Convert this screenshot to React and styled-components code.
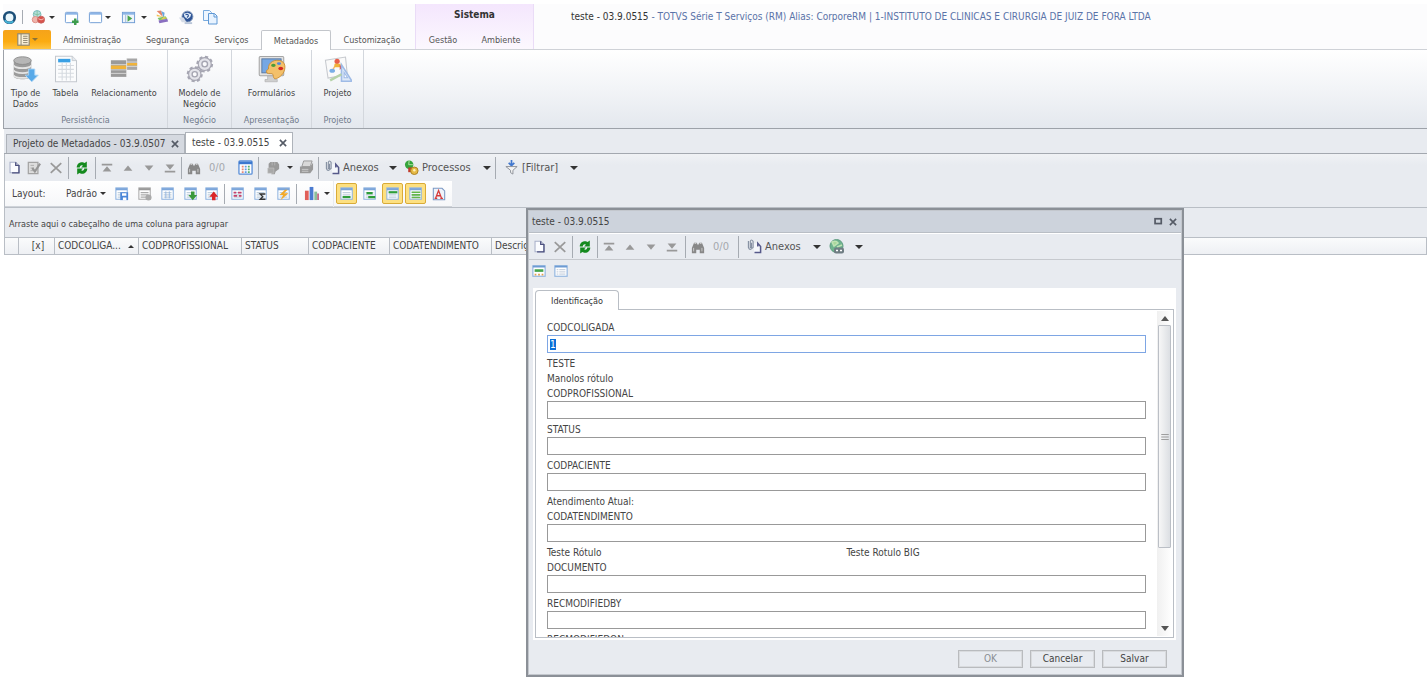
import React, { useEffect, useRef } from "react";
import styled, { createGlobalStyle, css } from "styled-components";

const uiFont = `"DejaVu Sans Condensed", "DejaVu Sans", Tahoma, sans-serif`;
const line = "#b9bec5";
const face = "#e8ebf0";

const GlobalStyle = createGlobalStyle`
  * {
    box-sizing: border-box;
  }
  body {
    margin: 0;
    background: #fff;
    color: #444;
    font-family: ${uiFont};
    font-size: 9px;
    line-height: 12px;
    overflow: hidden;
  }
  button, input {
    font: inherit;
    color: inherit;
  }
  button {
    border: 0;
    padding: 0;
    background: none;
    white-space: nowrap;
  }
`;

/* ---------- icons ---------- */

const Svg = styled.svg`
  display: block;
  flex: none;
  width: ${({ $size }) => $size || 14}px;
  height: ${({ $size }) => $size || 14}px;
`;

function Icon({ size, children }) {
  return (
    <Svg $size={size} viewBox="0 0 16 16" aria-hidden="true">
      {children}
    </Svg>
  );
}

const LogoIcon = () => (
  <Icon size={15}>
    <circle cx="8" cy="8" r="5.600" fill="#e9f6fb" stroke="#1c4f78" strokeWidth="2.800" />
    <path d="M3 11a6 6 0 0 0 9 1" fill="none" stroke="#45b5d8" strokeWidth="2" />
  </Icon>
);
const BallsIcon = () => (
  <Icon>
    <circle cx="7" cy="5" r="4.400" fill="#b5e0df" stroke="#6eb5b5" />
    <path d="M3 4q4 3 8 0M7 1v8" stroke="#7fc09a" fill="none" />
    <circle cx="5" cy="11" r="3.600" fill="#f0b4ab" stroke="#dd8a82" />
    <circle cx="11.500" cy="11" r="4" fill="#d9534c" stroke="#c5605b" />
    <path d="M8.500 10q3 2.500 6 0" stroke="#f5d0cc" fill="none" />
  </Icon>
);
const WindowIcon = ({ add }) => (
  <Icon size={15}>
    <rect x="1.500" y="2.500" width="13" height="11" rx="1" fill="#fff" stroke="#6d9bd3" />
    <path d="M2 4h12" stroke="#8db5e6" strokeWidth="2" />
    {add && <path d="M12 9v7M8.500 12.500h7" stroke="#3d9c4c" strokeWidth="2.600" />}
  </Icon>
);
const RunWindowIcon = () => (
  <Icon size={15}>
    <rect x="1.500" y="2.500" width="13" height="11" fill="#eef4fb" stroke="#6d9bd3" />
    <path d="M2 4h12" stroke="#8db5e6" strokeWidth="2" />
    <path d="M5 5v8" stroke="#9db8d8" />
    <path d="M7 5.500l5 3.500-5 3.500z" fill="#4aa34c" />
  </Icon>
);
const SwatchIcon = () => (
  <Icon>
    <path d="M2 1l5-.500L9 8z" fill="#e5846a" />
    <path d="M7 1l4 2-1 6z" fill="#6aa6de" />
    <path d="M2 5l8 3-8-1z" fill="#f3c04d" />
    <path d="M3 9l9-2 2 3-9 2z" fill="#7ac06b" />
    <path d="M4 12l10-2 1 3-10 2z" fill="#8a6fc0" />
    <path d="M10 8l4 1-8 2z" fill="#f0d04d" />
  </Icon>
);
const GlobeHelpIcon = () => (
  <Icon size={15}>
    <circle cx="9" cy="7" r="5.800" fill="#2f5597" stroke="#7c93b6" />
    <path d="M5 4l4-1 4 1.500-1 3-3 2-3-2z" fill="#e2eefb" />
    <path d="M7 5q3-1 3 1.500L8.500 8" fill="none" stroke="#2f5597" strokeWidth="1.300" />
    <path d="M0 8l5 0 3 5H3z" fill="#d4dbe6" />
    <path d="M6 14h8" stroke="#b9c5d8" strokeWidth="2" />
  </Icon>
);
const CopyIcon = () => (
  <Icon size={16}>
    <path d="M1.500 1.500h6l2 2v8h-8z" fill="#eef6ff" stroke="#78aade" />
    <path d="M6.500 4.500h6l2.500 2.500v8H6.500z" fill="#e8f3ff" stroke="#5f98d5" />
    <path d="M12 4.500V8h3" fill="none" stroke="#5f98d5" />
  </Icon>
);
const BookIcon = () => (
  <Icon size={13}>
    <rect x="1" y="1" width="14" height="14" fill="#fbf1d8" stroke="#8d8570" strokeWidth="1.400" />
    <path d="M5 1v14M7.500 4h5.500M7.500 6.600h5.500M7.500 9.200h5.500M7.500 11.800h5.500" stroke="#8d8570" strokeWidth="1.200" />
  </Icon>
);
const DatabaseIcon = () => (
  <Icon size={26}>
    <path d="M1 3.500v8.500c0 2.500 10 2.500 10 0V3.500z" fill="#9b9b9b" />
    <path d="M1 6c1 2 9 2 10 0M1 8.800c1 2 9 2 10 0M1 11.600c1 2 9 2 10 0" fill="none" stroke="#e5e5e5" />
    <ellipse cx="6" cy="3.200" rx="5" ry="2.200" fill="#b6b6b6" stroke="#8c8c8c" strokeWidth=".5" />
    <path d="M9.500 8h3.500v3.500h2L11.300 15.300 7.500 11.500h2z" fill="#58a9e8" stroke="#a8d3f5" strokeWidth=".5" />
  </Icon>
);
const SheetIcon = () => (
  <Icon size={28}>
    <path d="M2 .7h9.500l2.500 2.500V15.300H2z" fill="#fbfcfd" stroke="#c3c8ce" strokeWidth=".6" />
    <path d="M3.500 2.200h7v2h-7z" fill="#3aa0e4" />
    <path d="M3.500 6h9M3.500 8.200h9M3.500 10.400h9M3.500 12.600h9M5.800 4.500v10M8.200 4.500v10M10.500 4.500v10" stroke="#d5dae0" strokeWidth=".6" />
    <path d="M11.500.7v2.500H14" fill="#e5e9ee" stroke="#c3c8ce" strokeWidth=".5" />
  </Icon>
);
const RelationIcon = () => (
  <Icon size={28}>
    <path d="M.5 3h9v9.500h-9z" fill="#9a9a9a" />
    <path d="M9.500 2h6v6.500h-6z" fill="#a6a6a6" />
    <path d="M.5 6h9v2h-9zM9.500 4.500h6v1.500h-6z" fill="#f0b33a" />
    <path d="M.5 5.500h9M.5 8.500h9M.5 10.500h9M9.500 4h6M9.500 6.500h6M9.500 2v10.500" stroke="#ececec" strokeWidth=".4" />
  </Icon>
);
const GearsIcon = () => (
  <Icon size={26}>
    <g fill="#e4e4ea" stroke="#a6a6b2">
      <circle cx="10.700" cy="5.200" r="4.200" strokeWidth="1.200" strokeDasharray="1.800 1.500" />
      <circle cx="10.700" cy="5.200" r="3.700" strokeWidth=".6" />
      <circle cx="10.700" cy="5.200" r="1.600" fill="#fafafc" strokeWidth=".8" />
      <circle cx="5" cy="11" r="4" strokeWidth="1.200" strokeDasharray="1.800 1.340" />
      <circle cx="5" cy="11" r="3.500" strokeWidth=".6" />
      <circle cx="5" cy="11" r="1.500" fill="#fafafc" strokeWidth=".8" />
    </g>
  </Icon>
);
const PaletteIcon = () => (
  <Icon size={28}>
    <rect x=".7" y=".8" width="14" height="11" rx=".6" fill="#e3e3e3" stroke="#a5a5a5" strokeWidth=".6" />
    <rect x="2.200" y="2.200" width="11" height="8" fill="#75a7e4" stroke="#55749c" strokeWidth=".5" />
    <path d="M5.500 12h4v2h1.500v1.300H4V14h1.500z" fill="#cfcfcf" stroke="#b0b0b0" strokeWidth=".4" />
    <path d="M6 8C5.500 4 10 2 13.500 3.500c3 1.500 2 6 0 8-2 2-4 2.500-4.500 1.500-.5-1 0-2-1-2.300C6.500 10.500 5 11 4.800 9.600 4.700 8.500 5.500 8.500 6 8z" fill="#f3c06a" stroke="#c98b31" strokeWidth=".5" />
    <ellipse cx="8.800" cy="5.900" rx="1.300" ry=".9" fill="#4b9c3a" />
    <ellipse cx="12" cy="4.900" rx="1.200" ry=".8" fill="#4e86dc" />
    <ellipse cx="13" cy="7.700" rx="1.400" ry="1" fill="#d52a20" />
  </Icon>
);
const ProjectIcon = () => (
  <Icon size={28}>
    <path d="M.8 3l11.500-1.800 1 10-11 2z" fill="#fafafa" stroke="#c6c9ce" strokeWidth=".6" />
    <path d="M7.500 4L4.500 9.500" fill="none" stroke="#f2b96c" strokeWidth=".8" />
    <circle cx="7.500" cy="3.600" r="1.500" fill="#e8604c" />
    <path d="M6 5h3.500v2H6z" fill="#f0b33a" />
    <path d="M9 5.500l1.500 1.500L9 8.500z" fill="#d8484c" />
    <ellipse cx="4.700" cy="9" rx="1.600" ry="1.200" fill="#79aee6" />
    <path d="M10 5.500v9.500h6z" fill="#dce8f8" stroke="#9fbbe6" strokeWidth=".9" />
    <path d="M11.500 10v3h2z" fill="#fff" stroke="#9fbbe6" strokeWidth=".6" />
    <path d="M3.500 14.500L10 11" stroke="#b5d2a8" strokeWidth="1.400" />
  </Icon>
);
const NewIcon = () => (
  <Icon size={13}>
    <path d="M2.500 1.500h7l4 4v9h-11z" fill="#fbfcff" stroke="#a9b1c9" strokeWidth="1.300" />
    <path d="M13.500 5v9.500H5M9.500 1.500v4h4" fill="none" stroke="#4b4f7e" strokeWidth="1.600" />
  </Icon>
);
const EditIcon = () => (
  <Icon>
    <path d="M1.500 1.500h11v13h-11z" fill="#ddd" stroke="#a3a3a3" strokeWidth="1.400" />
    <path d="M4 5h4M4 8h4M4 11h6" stroke="#aaa" />
    <path d="M15 3l-6 9-3-4" fill="none" stroke="#969696" strokeWidth="2.400" />
  </Icon>
);
const DeleteIcon = () => (
  <Icon>
    <path d="M2 2.500l12 11M14 2.500L2 13.500" stroke="#999" strokeWidth="2" />
  </Icon>
);
const RefreshIcon = () => (
  <Icon>
    <path d="M2 7.500C2 3.500 5 1 9 1.500l2 .8L13.500.5V7.500H7l2-2.200C7 4.300 5.500 5.500 5.500 7.500z" fill="#158a1e" />
    <path d="M14 8.500c0 4-3 6.500-7 6l-2-.8L2.500 15.500V8.500H9l-2 2.200c2 1 3.500-.2 3.500-2.200z" fill="#158a1e" />
  </Icon>
);
const NavIcon = ({ kind }) => (
  <Icon>
    {kind === "first" && <path d="M2 3h12v2H2zM8 6l5 6H3z" fill="#999" />}
    {kind === "prev" && <path d="M8 5l5 6H3z" fill="#999" />}
    {kind === "next" && <path d="M8 11l5-6H3z" fill="#999" />}
    {kind === "last" && <path d="M8 10l5-6H3zM2 11h12v2H2z" fill="#999" />}
  </Icon>
);
const FindIcon = () => (
  <Icon>
    <path d="M1 15V9l2.500-6h3L8 6l1.500-3h3L15 9v6h-5v-4H6v4z" fill="#888" />
    <path d="M3 9v4M12.500 9v4M4 4h2M10 4h2" stroke="#d2d2d2" />
  </Icon>
);
const CalendarIcon = () => (
  <Icon size={15}>
    <rect x="1" y="1" width="14" height="14" rx="1" fill="#fff" stroke="#5b8fd8" strokeWidth="1.400" />
    <path d="M1 3h14" stroke="#3c78cf" strokeWidth="3" />
    <path d="M4 7h2M4 10h2M4 13h2" stroke="#e88a75" strokeWidth="1.800" />
    <path d="M7.200 7h2M7.200 10h2M7.200 13h2" stroke="#5f9ce6" strokeWidth="1.800" />
    <path d="M10.500 7h2M10.500 10h2M10.500 13h2" stroke="#5ab06a" strokeWidth="1.800" />
  </Icon>
);
const HandIcon = () => (
  <Icon>
    <path d="M3 3l2-2h8l2 3v5l-4 3-1 3H6l1-3-4-2z" fill="#999" />
    <path d="M2 8h7v6H2z" fill="#a8a8a8" stroke="#c9c9c9" strokeWidth=".6" />
    <path d="M7 1v4M10 1v4" stroke="#c4c4c4" strokeWidth=".7" />
  </Icon>
);
const PrinterIcon = () => (
  <Icon size={15}>
    <path d="M5 1h9l-2 6H3z" fill="#d9d9d9" stroke="#999" />
    <path d="M1 7h11l3-4v7l-3 4H1z" fill="#999" />
    <path d="M3 10h7M3 12h7" stroke="#ccc" />
  </Icon>
);
const AttachIcon = () => (
  <Icon size={15}>
    <path d="M7.500 4.500h4l3 3v7h-7z" fill="#f5f7fb" />
    <path d="M8 14.500h6.500V8l-3-3.500v3.500" fill="none" stroke="#56598a" strokeWidth="1.600" />
    <path d="M1.500 2v7q1.500 4 5 0V2.500q-2-3-3 0V9h1.300V4" fill="none" stroke="#8590a2" strokeWidth="1.200" />
  </Icon>
);
const ProcessIcon = () => (
  <Icon size={15}>
    <circle cx="5.500" cy="5" r="4.500" fill="#35a43c" />
    <path d="M5.500.5L5 5l4.500 0" stroke="#b6e6a4" fill="none" />
    <path d="M4.500 8h5v5h-5z" fill="#c03c2c" />
    <circle cx="11" cy="11.500" r="4" fill="#e6ba45" stroke="#a97f21" />
    <circle cx="11" cy="11" r="1.300" fill="#fff0bb" />
  </Icon>
);
const FilterIcon = () => (
  <Icon size={15}>
    <path d="M8 0v5M5 3l3 3 3-3" stroke="#4178cf" strokeWidth="1.800" fill="none" />
    <path d="M2 7h12l-4.500 4v4L7 13.500V11z" fill="#f4f4f4" stroke="#8b8f96" />
  </Icon>
);
const GlobeIcon = () => (
  <Icon size={16}>
    <circle cx="7.500" cy="7" r="6.500" fill="#6fb38e" stroke="#5f9c80" />
    <path d="M3 3q4-2 6 1l-4 3zM8 8l5-2" stroke="#bfe2b4" strokeWidth="1.500" fill="#a8d79a" />
    <rect x="5" y="8.500" width="10" height="6" rx="2" fill="#6f7d83" />
    <path d="M7 11.500h2M11 11.500h2" stroke="#fff" strokeWidth="1.500" />
  </Icon>
);

/* small sheet used by all the layout commands; the mark on it varies */
const GridIcon = ({ grey, children }) => (
  <Icon>
    <rect x="1" y="1" width="13" height="13" fill="#fff" stroke={grey ? "#aaa" : "#8fb3df"} strokeWidth="1.200" />
    <path d="M1 2.500h13" stroke={grey ? "#999" : "#7ba5da"} strokeWidth="2.500" />
    <path d="M3 6.500h9M3 9h9M3 11.500h9" stroke={grey ? "#aaa" : "#c0d0de"} strokeWidth="1.400" />
    {children}
  </Icon>
);
const ChartIcon = () => (
  <Icon size={15}>
    <path d="M1 5h4v10H1z" fill="#e0605a" />
    <path d="M6 1h4v14H6z" fill="#4b7bd0" />
    <path d="M11 6h3v9h-3z" fill="#8cbf9a" />
    <path d="M14 8h2v7h-2z" fill="#c76c88" />
  </Icon>
);

/* ---------- shared parts ---------- */

const Caret = styled.span`
  display: inline-block;
  flex: none;
  border: solid transparent;
  border-width: ${({ $small }) => ($small ? "3px 3px 0" : "4px 4px 0")};
  border-top-color: #333;
`;

const ToolButton = styled.button`
  display: flex;
  align-items: center;
  justify-content: center;
  flex: none;
  width: ${({ $w }) => $w || 22}px;
  height: 21px;
  ${({ $on }) =>
    $on &&
    css`
      border: 1px solid #d9ab38;
      border-radius: 2px;
      background: #fde081;
    `}
`;

const TextButton = styled.button`
  display: flex;
  align-items: center;
  gap: 3px;
  flex: none;
  width: ${({ $w }) => $w}px;
  height: 22px;
  padding: 0 4px 0 3px;
  font-size: 11px;
  color: #555;

  ${Caret} {
    margin-left: auto;
  }
`;

const Separator = styled.span`
  flex: none;
  width: 1px;
  height: ${({ $h }) => $h || 22}px;
  margin: 0 ${({ $gap = 1 }) => $gap}px 0 ${({ $lead = 1 }) => $lead}px;
  background: #a6abb2;
`;

const Counter = styled.span`
  width: 27px;
  padding-left: 4px;
  font-size: 11px;
  color: #a5a8ad;
`;

/* ---------- header and ribbon ---------- */

const Header = styled.header`
  display: flex;
  margin: 4px 0 0 3px;
  height: 46px;
  background: #fcfcfd;
  border-bottom: 1px solid #cfd2d7;
`;

const HeaderLeft = styled.div`
  flex: none;
  width: 412px;
`;

const QuickAccess = styled.div`
  display: flex;
  align-items: center;
  height: 26px;
`;

const MenuTabs = styled.nav`
  display: flex;
  height: 20px;
`;

const MenuTab = styled.button`
  flex: none;
  width: ${({ $w }) => $w}px;
  height: 20px;
  color: #555;
  ${({ $active }) =>
    $active &&
    css`
      border: 1px solid #c3c6cb;
      border-bottom: 0;
      border-radius: 2px 2px 0 0;
      background: #fff;
    `}
`;

const AppButton = styled.button`
  display: flex;
  align-items: center;
  justify-content: center;
  gap: 2px;
  width: 48px;
  height: 19px;
  background: linear-gradient(#f5a31a, #fbab12 60%, #ffc440);
  border-radius: 2px 2px 0 0;

  ${Caret} {
    border-top-color: #8b7338;
  }
`;

const ContextTabs = styled.div`
  flex: none;
  width: 119px;
  border: solid #eadcf7;
  border-width: 0 1px;
  background: linear-gradient(#f4e6fd, #fcf8fe);
`;

const ContextTitle = styled.div`
  height: 26px;
  padding-top: 5px;
  text-align: center;
  font-size: 10px;
  font-weight: bold;
  color: #333;
`;

const Caption = styled.h1`
  margin: 0;
  padding: 7px 0 0 37px;
  font-size: 10px;
  font-weight: normal;
  white-space: nowrap;
  color: #5a73a8;

  span {
    color: #333;
  }
`;

const Ribbon = styled.section`
  display: flex;
  height: 79px;
  margin-left: 3px;
  background: linear-gradient(#fff, #f2f4f7 50%, #e4e8ee);
  border: solid #9da2a9;
  border-width: 0 0 1px 1px;
`;

const RibbonGroup = styled.div`
  display: flex;
  flex-direction: column;
  width: ${({ $w }) => $w}px;
  border-right: 1px solid #d3d7dd;
`;

const RibbonItems = styled.div`
  display: flex;
  flex: 1;
`;

const RibbonButton = styled.button`
  display: flex;
  flex-direction: column;
  align-items: center;
  width: ${({ $w }) => $w || 60}px;
  flex: ${({ $grow }) => ($grow ? 1 : "none")};
  padding: 5px 4px 0;
  white-space: normal;
  line-height: 11px;

  ${Svg} {
    width: 28px;
    height: 28px;
    margin-bottom: 5px;
  }
`;

const RibbonLabel = styled.div`
  height: 15px;
  line-height: 15px;
  text-align: center;
  color: #717b8c;
`;

/* ---------- documents and grid ---------- */

const DocTabs = styled.div`
  display: flex;
  align-items: flex-end;
  height: 25px;
  margin-left: 4px;
  padding-left: 2px;
  background: ${face};
  border-bottom: 1px solid #a3a8af;
`;

const DocTab = styled.div`
  display: flex;
  align-items: center;
  justify-content: space-between;
  width: ${({ $w }) => $w}px;
  height: ${({ $active }) => ($active ? 21 : 19)}px;
  padding: 0 4px 0 6px;
  border: 1px solid #aeb3ba;
  border-bottom: 0;
  background: ${({ $active }) => ($active ? "#fff" : "#d5d9e0")};
  font-size: 10px;
`;

const Workspace = styled.main`
  margin-left: 4px;
  border-left: 1px solid ${line};
`;

const Toolbar = styled.div`
  display: flex;
  align-items: center;
  height: 27px;
  background: linear-gradient(#f0f2f5, ${face} 40%);
`;

const LayoutBars = styled.div`
  display: flex;
  gap: 1px;
  height: 27px;
  background: ${face};
  border-bottom: 1px solid ${line};
`;

const LayoutBar = styled.div`
  display: flex;
  align-items: center;
  gap: ${({ $gap }) => $gap || 0}px;
  padding: 0 3px 0 2px;
  background: linear-gradient(#fff, #f6f7f9);
  border-bottom: 1px solid #cfd3d9;
`;

const LayoutText = styled.span`
  width: ${({ $w }) => $w}px;
  padding-left: 5px;
  font-size: 10px;
`;

const LayoutSelect = styled.button`
  display: flex;
  align-items: center;
  justify-content: center;
  gap: 3px;
  width: 48px;
  font-size: 10px;
`;

const GroupPanel = styled.div`
  height: 29px;
  padding: 10px 0 0 4px;
  background: ${face};
`;

const Grid = styled.table`
  width: 100%;
  table-layout: fixed;
  border-collapse: separate;
  border-spacing: 0;
  border: solid ${line};
  border-width: 1px 0;

  th {
    height: 16px;
    padding: 0 0 0 3px;
    overflow: hidden;
    text-align: left;
    font-size: 10px;
    font-weight: normal;
    white-space: nowrap;
    background: linear-gradient(#fafbfc, #eef0f4);
    border-right: 1px solid ${line};
  }
  th:nth-child(2) {
    text-align: center;
  }
`;

const SortMark = styled.span`
  float: right;
  margin: 5px 4px 0 0;
  border: solid transparent;
  border-width: 0 3px 3px;
  border-bottom-color: #333;
`;

/* ---------- record window ---------- */

const Window = styled.section`
  position: absolute;
  left: 526px;
  top: 208px;
  width: 658px;
  border: 2px solid #8b9097;
  outline: 1px solid #c3c7cd;
  outline-offset: -3px;
  background: ${face};
`;

const WindowTitle = styled.div`
  display: flex;
  align-items: center;
  height: 22px;
  margin: 1px 1px 0;
  padding: 0 3px;
  background: #cdd3dc;
  border-bottom: 1px solid ${line};
  font-size: 10px;

  span {
    flex: 1;
  }
`;

const WindowToolbar = styled.div`
  display: flex;
  align-items: center;
  height: 27px;
  margin: 0 1px;
  border-top: 1px solid #fff;
  border-bottom: 1px solid #c6c9ce;
`;

const ViewBar = styled.div`
  display: flex;
  height: 28px;
`;

const Pages = styled.div`
  margin: 0 6px 0 5px;
  padding: 2px;
  background: #fff;
`;

const PageTab = styled.button`
  display: block;
  position: relative;
  width: 84px;
  height: 20px;
  margin-bottom: -1px;
  border: 1px solid ${line};
  border-bottom: 0;
  border-radius: 4px 4px 0 0;
  background: #fff;
  color: #333;
`;

const PageBody = styled.div`
  display: flex;
  height: 329px;
  border: 1px solid ${line};
`;

const Form = styled.form`
  flex: 1;
  padding: 10px 10px 0 11px;
  overflow: hidden;
  font-size: 10px;
  line-height: 15px;
`;

const Row = styled.div`
  display: grid;
  grid-template-columns: 1fr 1fr;
`;

const Field = styled.div`
  height: 36px;

  label {
    display: block;
    height: 15px;
  }
  input {
    display: block;
    width: 100%;
    height: 18px;
    padding: 0 2px;
    border: 1px solid #999;
    background: #fff;
    outline: 0;
  }
  input:focus {
    border-color: #7ea6e4;
  }
  input::selection {
    background: #0a6fd8;
    color: #fff;
  }
`;

const ScrollBar = styled.div`
  display: flex;
  flex-direction: column;
  align-items: center;
  width: 15px;
  margin: 1px;
  padding: 5px 0;
  background: linear-gradient(90deg, #f0f0f0, #fff);
`;

const ScrollArrow = styled.span`
  border: solid transparent;
  border-width: ${({ $up }) => ($up ? "0 4px 5px" : "5px 4px 0")};
  border-color: ${({ $up }) => ($up ? "transparent transparent #555" : "#555 transparent transparent")};
`;

const ScrollThumb = styled.span`
  display: flex;
  align-items: center;
  justify-content: center;
  width: 13px;
  height: 223px;
  margin: 4px 0 auto;
  border: 1px solid #bbbfc6;
  border-radius: 1px;
  background: linear-gradient(90deg, #f7f7f7, #dcdfe3);
`;

const Actions = styled.div`
  display: flex;
  justify-content: flex-end;
  gap: 7px;
  padding: 10px 15px 7px;
`;

const ActionButton = styled.button`
  width: 65px;
  height: 18px;
  border: 1px solid #b9bbbe;
  outline: 1px solid #d9dbde;
  outline-offset: -2px;
  font-size: 10px;
  color: ${({ disabled }) => (disabled ? "#8a8d92" : "#444")};
`;

const menu = [
  ["Administração", 82],
  ["Segurança", 69],
  ["Serviços", 59],
  ["Metadados", 70],
  ["Customização", 82],
];

const columns = [
  ["", 14],
  ["[x]", 36],
  ["CODCOLIGA...", 84],
  ["CODPROFISSIONAL", 103],
  ["STATUS", 67],
  ["CODPACIENTE", 81],
  ["CODATENDIMENTO", 102],
  ["Descrição"],
];

const fields = [
  { name: "CODCOLIGADA", value: "1" },
  { texts: ["TESTE"] },
  { texts: ["Manolos rótulo"] },
  { name: "CODPROFISSIONAL" },
  { name: "STATUS" },
  { name: "CODPACIENTE" },
  { texts: ["Atendimento Atual:"] },
  { name: "CODATENDIMENTO" },
  { texts: ["Teste Rótulo", "Teste Rotulo BIG"] },
  { name: "DOCUMENTO" },
  { name: "RECMODIFIEDBY" },
  { name: "RECMODIFIEDON" },
];

function NavButtons() {
  return ["first", "prev", "next", "last"].map((kind) => (
    <ToolButton key={kind} $w={21} aria-label={kind}>
      <NavIcon kind={kind} />
    </ToolButton>
  ));
}

function CloseButton() {
  return (
    <ToolButton $w={11} aria-label="Fechar">
      <Icon size={10}>
        <path d="M3 3l10 10M13 3L3 13" stroke="#555b66" strokeWidth="2.600" />
      </Icon>
    </ToolButton>
  );
}

function TopBar() {
  return (
    <Header>
      <HeaderLeft>
        <QuickAccess>
          <ToolButton $w={13}><LogoIcon /></ToolButton>
          <Separator $h={14} $lead={6} $gap={3} />
          <ToolButton $w={23}><BallsIcon /></ToolButton>
          <ToolButton $w={6}><Caret $small /></ToolButton>
          <ToolButton $w={32}><WindowIcon add /></ToolButton>
          <ToolButton $w={16}><WindowIcon /></ToolButton>
          <ToolButton $w={10}><Caret $small /></ToolButton>
          <ToolButton $w={30}><RunWindowIcon /></ToolButton>
          <ToolButton $w={2}><Caret $small /></ToolButton>
          <ToolButton $w={34}><SwatchIcon /></ToolButton>
          <ToolButton $w={14}><GlobeHelpIcon /></ToolButton>
          <ToolButton $w={34}><CopyIcon /></ToolButton>
        </QuickAccess>
        <MenuTabs>
          <AppButton aria-label="Menu">
            <BookIcon />
            <Caret $small />
          </AppButton>
          {menu.map(([name, w]) => (
            <MenuTab key={name} $w={w} $active={name === "Metadados"}>{name}</MenuTab>
          ))}
        </MenuTabs>
      </HeaderLeft>
      <ContextTabs>
        <ContextTitle>Sistema</ContextTitle>
        <MenuTabs>
          <MenuTab $w={54}>Gestão</MenuTab>
          <MenuTab $w={62}>Ambiente</MenuTab>
        </MenuTabs>
      </ContextTabs>
      <Caption>
        <span>teste - 03.9.0515</span> - TOTVS Série T Serviços (RM) Alias: CorporeRM |
        1-INSTITUTO DE CLINICAS E CIRURGIA DE JUIZ DE FORA LTDA
      </Caption>
    </Header>
  );
}

function MainRibbon() {
  return (
    <Ribbon>
      <RibbonGroup $w={164}>
        <RibbonItems>
          <RibbonButton $w={43}><DatabaseIcon />Tipo de Dados</RibbonButton>
          <RibbonButton $w={37}><SheetIcon />Tabela</RibbonButton>
          <RibbonButton $w={80}><RelationIcon />Relacionamento</RibbonButton>
        </RibbonItems>
        <RibbonLabel>Persistência</RibbonLabel>
      </RibbonGroup>
      <RibbonGroup $w={64}>
        <RibbonItems>
          <RibbonButton $grow><GearsIcon />Modelo de Negócio</RibbonButton>
        </RibbonItems>
        <RibbonLabel>Negócio</RibbonLabel>
      </RibbonGroup>
      <RibbonGroup $w={80}>
        <RibbonItems>
          <RibbonButton $grow><PaletteIcon />Formulários</RibbonButton>
        </RibbonItems>
        <RibbonLabel>Apresentação</RibbonLabel>
      </RibbonGroup>
      <RibbonGroup $w={52}>
        <RibbonItems>
          <RibbonButton $grow><ProjectIcon />Projeto</RibbonButton>
        </RibbonItems>
        <RibbonLabel>Projeto</RibbonLabel>
      </RibbonGroup>
    </Ribbon>
  );
}

function MainToolbar() {
  return (
    <Toolbar>
      <ToolButton $w={18}><NewIcon /></ToolButton>
      <ToolButton><EditIcon /></ToolButton>
      <ToolButton><DeleteIcon /></ToolButton>
      <Separator />
      <ToolButton $w={24}><RefreshIcon /></ToolButton>
      <Separator $gap={0} />
      <NavButtons />
      <Separator />
      <ToolButton><FindIcon /></ToolButton>
      <Counter>0/0</Counter>
      <ToolButton $w={26}><CalendarIcon /></ToolButton>
      <Separator $lead={0} />
      <ToolButton $w={26}><HandIcon /></ToolButton>
      <ToolButton $w={8}><Caret $small /></ToolButton>
      <ToolButton $w={24}><PrinterIcon /></ToolButton>
      <Separator $lead={0} $gap={3} />
      <TextButton $w={79}><AttachIcon />Anexos<Caret /></TextButton>
      <TextButton $w={94}><ProcessIcon />Processos<Caret /></TextButton>
      <Separator $lead={0} $gap={5} />
      <TextButton $w={81}><FilterIcon />[Filtrar]<Caret /></TextButton>
    </Toolbar>
  );
}

function LayoutToolbar() {
  return (
    <LayoutBars>
      <LayoutBar>
        <LayoutText $w={55}>Layout:</LayoutText>
        <LayoutSelect>Padrão <Caret $small /></LayoutSelect>
        <ToolButton $w={23}>
          <GridIcon><path d="M6 6h9v9H6z" fill="#4a86d8" /><path d="M8 7h5v3H8zM9 12h4v3H9z" fill="#fff" /></GridIcon>
        </ToolButton>
        <ToolButton $w={23}>
          <GridIcon grey><circle cx="12" cy="12" r="3.500" fill="#aaa" /></GridIcon>
        </ToolButton>
        <ToolButton $w={23}>
          <GridIcon><path d="M5.500 5v8M9.500 5v8" stroke="#8fb4e2" /></GridIcon>
        </ToolButton>
        <ToolButton $w={23}>
          <GridIcon><path d="M8 5h4v4h3l-5 6-5-6h3z" fill="#39993c" /></GridIcon>
        </ToolButton>
        <ToolButton $w={20}>
          <GridIcon><path d="M8 15h4v-4h3l-5-6-5 6h3z" fill="#da2527" /></GridIcon>
        </ToolButton>
        <Separator $h={20} $lead={2} />
        <ToolButton $w={23}>
          <GridIcon><path d="M3 6.500h3M8 6.500h4M3 10h4M9 10h3" stroke="#c4426c" strokeWidth="2" /></GridIcon>
        </ToolButton>
        <ToolButton $w={23}>
          <GridIcon><path d="M13 8H7l3 3-3 3h6" fill="none" stroke="#333" strokeWidth="1.500" /></GridIcon>
        </ToolButton>
        <ToolButton $w={23}>
          <GridIcon><path d="M9 3L3 9h4l-3 6 9-8H8l4-4z" fill="#f2a928" /></GridIcon>
        </ToolButton>
        <Separator $h={20} $gap={2} />
        <ToolButton $w={24}><ChartIcon /></ToolButton>
        <ToolButton $w={7}><Caret $small /></ToolButton>
      </LayoutBar>
      <LayoutBar $gap={2}>
        <ToolButton $w={21} $on>
          <GridIcon><path d="M3 11.500h9" stroke="#2e9e3b" strokeWidth="2.500" /></GridIcon>
        </ToolButton>
        <ToolButton $w={21}>
          <GridIcon><path d="M4 7h7M6 11.500h8" stroke="#2e9e3b" strokeWidth="2.500" /></GridIcon>
        </ToolButton>
        <ToolButton $w={21} $on>
          <GridIcon><path d="M3 6h10" stroke="#2e9e3b" strokeWidth="2.500" /></GridIcon>
        </ToolButton>
        <ToolButton $w={21} $on>
          <GridIcon><path d="M3 6h10M3 9h10M3 12h10" stroke="#62b64c" strokeWidth="1.800" /></GridIcon>
        </ToolButton>
        <ToolButton $w={21}>
          <Icon>
            <path d="M1.500 1.500h10l3 3v10h-13z" fill="#eef3fa" stroke="#7b98c4" strokeWidth="1.200" />
            <path d="M4 13l3.500-9L11 13M5.500 10h4M3 13h3M9.500 13h3" fill="none" stroke="#d63a3a" strokeWidth="1.500" />
          </Icon>
        </ToolButton>
      </LayoutBar>
    </LayoutBars>
  );
}

function RecordWindow() {
  const first = useRef(null);

  useEffect(() => {
    first.current.focus();
    first.current.select();
  }, []);

  return (
    <Window role="dialog" aria-label="teste - 03.9.0515">
      <WindowTitle>
        <span>teste - 03.9.0515</span>
        <ToolButton $w={18} aria-label="Maximizar">
          <Icon size={11}><rect x="3" y="4" width="9" height="7" fill="none" stroke="#555b66" strokeWidth="2.500" /></Icon>
        </ToolButton>
        <CloseButton />
      </WindowTitle>
      <WindowToolbar>
        <ToolButton $w={20}><NewIcon /></ToolButton>
        <ToolButton><DeleteIcon /></ToolButton>
        <Separator />
        <ToolButton><RefreshIcon /></ToolButton>
        <Separator $gap={0} />
        <NavButtons />
        <Separator $lead={3} />
        <ToolButton><FindIcon /></ToolButton>
        <Counter>0/0</Counter>
        <Separator $lead={2} $gap={5} />
        <TextButton $w={81}><AttachIcon />Anexos<Caret /></TextButton>
        <ToolButton $w={24}><GlobeIcon /></ToolButton>
        <ToolButton $w={20}><Caret /></ToolButton>
      </WindowToolbar>
      <ViewBar>
        <ToolButton>
          <Icon>
            <rect x="1" y="2" width="14" height="12" fill="#fff" stroke="#8fb3df" strokeWidth="1.300" />
            <path d="M1 3h14" stroke="#6d9bd3" strokeWidth="2" />
            <path d="M3 7.500h10" stroke="#45a44b" strokeWidth="3" />
            <path d="M3 12h2M7 12h2M11 12h2" stroke="#e0a050" strokeWidth="2" />
          </Icon>
        </ToolButton>
        <ToolButton>
          <Icon>
            <rect x="1" y="2" width="14" height="12" fill="#fff" stroke="#8fb3df" strokeWidth="1.300" />
            <path d="M1 3h14" stroke="#6d9bd3" strokeWidth="2" />
            <path d="M3 6.500h2M6 6.500h7M3 9h2M6 9h7M3 11.500h2M6 11.500h7" stroke="#b4c0d2" />
          </Icon>
        </ToolButton>
      </ViewBar>
      <Pages>
        <PageTab>Identificação</PageTab>
        <PageBody>
          <Form>
            {fields.map(({ name, value, texts }) =>
              texts ? (
                <Row key={texts[0]}>
                  {texts.map((text) => <span key={text}>{text}</span>)}
                </Row>
              ) : (
                <Field key={name}>
                  <label htmlFor={name}>{name}</label>
                  <input id={name} ref={value ? first : null} defaultValue={value} />
                </Field>
              )
            )}
          </Form>
          <ScrollBar>
            <ScrollArrow $up />
            <ScrollThumb>
              <Icon size={10}><path d="M2 4h12M2 8h12M2 12h12" stroke="#999" strokeWidth="1.500" /></Icon>
            </ScrollThumb>
            <ScrollArrow />
          </ScrollBar>
        </PageBody>
      </Pages>
      <Actions>
        <ActionButton disabled>OK</ActionButton>
        <ActionButton>Cancelar</ActionButton>
        <ActionButton>Salvar</ActionButton>
      </Actions>
    </Window>
  );
}

export default function App() {
  return (
    <>
      <GlobalStyle />
      <TopBar />
      <MainRibbon />
      <DocTabs>
        <DocTab $w={179}>
          Projeto de Metadados - 03.9.0507
          <CloseButton />
        </DocTab>
        <DocTab $w={108} $active>
          teste - 03.9.0515
          <CloseButton />
        </DocTab>
      </DocTabs>
      <Workspace>
        <MainToolbar />
        <LayoutToolbar />
        <GroupPanel>Arraste aqui o cabeçalho de uma coluna para agrupar</GroupPanel>
        <Grid>
          <colgroup>
            {columns.map(([name, w]) => <col key={name} width={w} />)}
          </colgroup>
          <thead>
            <tr>
              {columns.map(([name]) => (
                <th key={name}>
                  {name === "CODCOLIGA..." && <SortMark />}
                  {name}
                </th>
              ))}
            </tr>
          </thead>
        </Grid>
      </Workspace>
      <RecordWindow />
    </>
  );
}
